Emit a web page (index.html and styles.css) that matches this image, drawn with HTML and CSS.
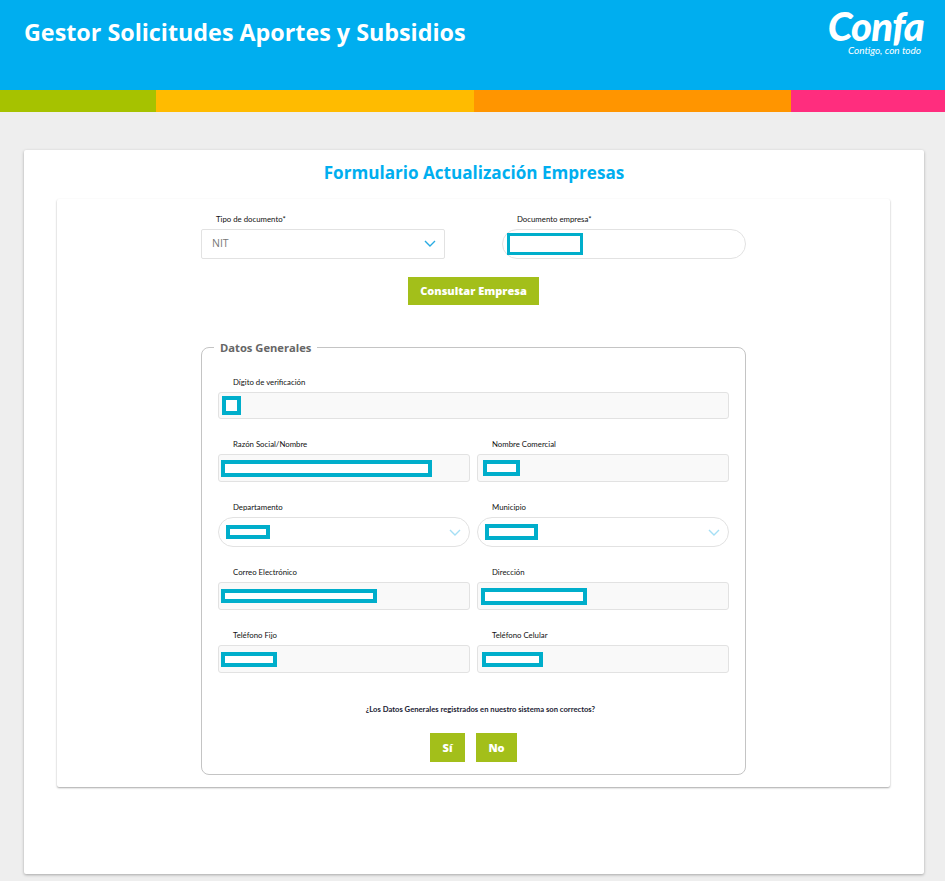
FILE: index.html
```html
<!DOCTYPE html>
<html lang="es">
<head>
    <meta charset="UTF-8">
    <meta name="viewport" content="width=device-width, initial-scale=1.0">
    <title>Gestor Solicitudes Aportes y Subsidios</title>
    <link rel="stylesheet" href="styles.css">
</head>
<body>
    <header class="top">
        <h1>Gestor Solicitudes Aportes y Subsidios</h1>
        <div class="logo">
            <span class="logo-name">Confa</span>
            <span class="logo-tag">Contigo, con todo</span>
        </div>
    </header>
    <div class="stripe">
        <span class="s-green"></span>
        <span class="s-yellow"></span>
        <span class="s-orange"></span>
        <span class="s-pink"></span>
    </div>
    <main class="card">
        <h2>Formulario Actualización Empresas</h2>
        <div class="inner">
            <div class="wrap">
                <div class="doc-row">
                    <div class="doc-col">
                        <label>Tipo de documento*</label>
                        <div class="box box-select">
                            <span>NIT</span>
                            <svg class="chev" viewBox="0 0 12 7"><polyline points="1,1 6,6 11,1"/></svg>
                        </div>
                    </div>
                    <div class="doc-col">
                        <label>Documento empresa*</label>
                        <div class="box box-round"><i class="mark m-doc"></i></div>
                    </div>
                </div>
                <div class="center"><button class="btn btn-wide">Consultar Empresa</button></div>

                <fieldset class="general">
                    <legend>Datos Generales</legend>
                    <div class="grid">
                        <div class="field full">
                            <label>Dígito de verificación</label>
                            <div class="box box-off b-short"><i class="mark m-dig"></i></div>
                        </div>
                        <div class="field">
                            <label>Razón Social/Nombre</label>
                            <div class="box box-off"><i class="mark m-razon"></i></div>
                        </div>
                        <div class="field">
                            <label>Nombre Comercial</label>
                            <div class="box box-off"><i class="mark m-nombre"></i></div>
                        </div>
                        <div class="field">
                            <label>Departamento</label>
                            <div class="box box-round b-tall">
                                <i class="mark m-depto"></i>
                                <svg class="chev faded" viewBox="0 0 12 7"><polyline points="1,1 6,6 11,1"/></svg>
                            </div>
                        </div>
                        <div class="field">
                            <label>Municipio</label>
                            <div class="box box-round b-tall">
                                <i class="mark m-muni"></i>
                                <svg class="chev faded" viewBox="0 0 12 7"><polyline points="1,1 6,6 11,1"/></svg>
                            </div>
                        </div>
                        <div class="field">
                            <label>Correo Electrónico</label>
                            <div class="box box-off"><i class="mark m-correo"></i></div>
                        </div>
                        <div class="field">
                            <label>Dirección</label>
                            <div class="box box-off"><i class="mark m-dir"></i></div>
                        </div>
                        <div class="field">
                            <label>Teléfono Fijo</label>
                            <div class="box box-off"><i class="mark m-fijo"></i></div>
                        </div>
                        <div class="field">
                            <label>Teléfono Celular</label>
                            <div class="box box-off"><i class="mark m-cel"></i></div>
                        </div>
                    </div>
                    <p class="question">¿Los Datos Generales registrados en nuestro sistema son correctos?</p>
                    <div class="answers">
                        <button class="btn btn-si">Sí</button>
                        <button class="btn btn-no">No</button>
                    </div>
                </fieldset>
            </div>
        </div>
    </main>
</body>
</html>
```

FILE: styles.css
```css
* {
	box-sizing: border-box;
}

html, body {
	margin: 0;
	height: 881px;
	overflow: hidden;
}

body {
	background: #eeeeee;
	font-family: "Open Sans", "Noto Sans", sans-serif;
}

.top {
	height: 90px;
	background: #00aeef;
	display: flex;
	justify-content: space-between;
	padding: 0 21px 0 24px;
	color: #fff;
}

.top h1 {
	margin: 16px 0 0;
	font-size: 23.3px;
	line-height: 32px;
	font-weight: 700;
}

.logo {
	display: flex;
	flex-direction: column;
	align-items: flex-end;
	padding-top: 8px;
}

.logo-name {
	font-family: "Lato", sans-serif;
	font-size: 40px;
	line-height: 36px;
	font-weight: 900;
	font-style: italic;
	letter-spacing: -0.8px;
}

.logo-tag {
	font-family: "Lato", sans-serif;
	font-size: 10px;
	line-height: 12px;
	font-style: italic;
	margin: 0 3px 0 0;
}

.stripe {
	display: flex;
	height: 22px;
}

.s-green { width: 156px; background: #a6c200; }
.s-yellow { width: 318px; background: #ffbb00; }
.s-orange { width: 317px; background: #ff9500; }
.s-pink { width: 154px; background: #ff2d7e; }

.card {
	margin: 38px 21px 0 24px;
	height: 724px;
	background: #fff;
	border-radius: 2px;
	box-shadow: 0 1px 3px rgba(0, 0, 0, 0.3);
}

.card h2 {
	margin: 0;
	height: 49px;
	padding-top: 11px;
	text-align: center;
	color: #00aeef;
	font-size: 17.1px;
	line-height: 24px;
	font-weight: 700;
}

.inner {
	margin: 0 34px 0 33px;
	height: 588px;
	background: #fff;
	border-radius: 2px;
	box-shadow: 0 1px 2px rgba(0, 0, 0, 0.35);
}

.wrap {
	width: 545px;
	margin: 0 auto;
	padding-top: 15px;
}

.doc-row {
	display: flex;
	justify-content: space-between;
}

.doc-col {
	width: 244px;
}

label {
	display: block;
	height: 10px;
	margin: 0 0 5px 15px;
	font-family: "Lato", sans-serif;
	font-size: 7.8px;
	line-height: 10px;
	color: #111;
}

.box {
	display: flex;
	align-items: center;
	justify-content: space-between;
	height: 28px;
	border: 1px solid #e2e2e2;
	border-radius: 2px;
	background: #fff;
	font-size: 10.5px;
	color: #777;
}

.box-select {
	height: 30px;
	padding: 0 8px 2px 10px;
}

.box-round {
	height: 30px;
	border-radius: 15px;
	padding: 0 8px 0 4px;
}

.b-tall {
	padding-left: 7px;
}

.box-off {
	background: #f9f9f9;
	border-radius: 3px;
	padding-left: 2px;
}

.b-short {
	height: 27px;
}

.chev {
	width: 12px;
	height: 7px;
	fill: none;
	stroke: #29abe2;
	stroke-width: 1.4;
}

.chev.faded {
	stroke: #a5dff5;
}

/* recuadros que tapan los datos en la captura */
.mark {
	display: block;
	border: 4px solid #00aecb;
	background: #fff;
}

.m-doc { width: 76px; height: 22px; border-width: 3px; }
.m-dig { width: 19px; height: 19px; margin-left: 1px; }
.m-razon { width: 211px; height: 17px; }
.m-nombre { width: 37px; height: 16px; margin-left: 3px; }
.m-depto { width: 44px; height: 14px; }
.m-muni { width: 53px; height: 16px; }
.m-correo { width: 156px; height: 14px; }
.m-dir { width: 106px; height: 17px; margin-left: 1px; }
.m-fijo { width: 56px; height: 15px; }
.m-cel { width: 61px; height: 15px; margin-left: 2px; }

.center {
	display: flex;
	justify-content: center;
	margin-top: 18px;
}

.btn {
	border: none;
	background: #a3bf1a;
	color: #fff;
	font-family: "Open Sans", sans-serif;
	font-weight: 800;
	font-size: 11px;
	padding: 0;
	cursor: pointer;
}

.btn-wide {
	width: 131px;
	height: 28px;
	padding-bottom: 1px;
}

.general {
	margin: 34px 0 0;
	padding: 22px 16px 12px;
	min-width: 0;
	height: 436px;
	border: 1px solid #c4c4c4;
	border-radius: 8px;
}

.general legend {
	margin-left: -4px;
	padding: 1px 6px 0;
	height: 16px;
	font-size: 11.2px;
	line-height: 16px;
	font-weight: 700;
	color: #666;
}

.grid {
	display: grid;
	grid-template-columns: 252px 252px;
	column-gap: 7px;
	row-gap: 20px;
}

.full {
	grid-column: 1 / 3;
}

.question {
	margin: 31px 0 0;
	padding-left: 14px;
	height: 10px;
	text-align: center;
	font-family: "Lato", sans-serif;
	font-size: 7.65px;
	line-height: 10px;
	font-weight: 700;
	color: #223;
}

.answers {
	display: flex;
	justify-content: center;
	gap: 11px;
	margin-top: 19px;
}

.btn-si { width: 35px; height: 29px; }
.btn-no { width: 41px; height: 29px; }
```
